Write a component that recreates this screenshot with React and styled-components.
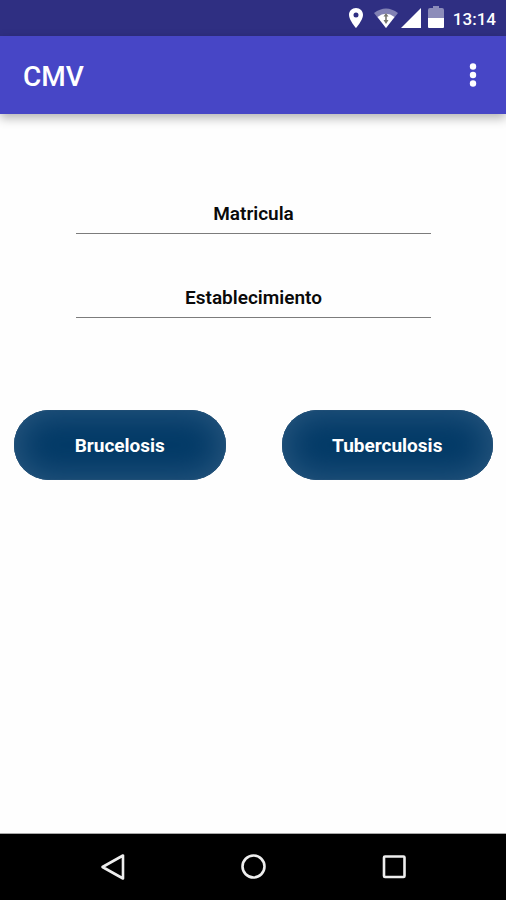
import React from 'react'
import styled, { createGlobalStyle } from 'styled-components'

const GlobalStyle = createGlobalStyle`
  * {
    box-sizing: border-box;
  }

  body {
    margin: 0;
    background: #fefefe;
    font-family: Roboto, sans-serif;
  }
`
const Screen = styled.div`
  display: flex;
  flex-direction: column;
  min-height: 100vh;
`
const StatusBar = styled.div`
  display: flex;
  align-items: center;
  justify-content: flex-end;
  height: 36px;
  padding: 0 10px;
  background: #2f2f82;
  color: #fff;
`
const StatusIcon = styled.svg`
  display: block;
  width: ${props => props.$width}px;
  height: 24px;
  margin-right: ${props => props.$gap}px;
  fill: #fff;
`
const Clock = styled.span`
  padding-top: 1px;
  font-size: 17px;
  font-weight: 500;
  line-height: 24px;
`
const AppBar = styled.header`
  display: flex;
  align-items: center;
  justify-content: space-between;
  height: 78px;
  padding: 0 16px 0 23px;
  background: #4746c6;
  box-shadow: 0 4px 10px rgba(0, 0, 0, .3);
`
const Title = styled.h1`
  margin: 0;
  padding-top: 4px;
  color: #fff;
  font-size: 28px;
  font-weight: 500;
  line-height: 36px;
`
const MenuButton = styled.button`
  display: flex;
  align-items: center;
  justify-content: center;
  width: 34px;
  height: 48px;
  padding: 0;
  border: 0;
  background: none;
  cursor: pointer;
`
const Main = styled.main`
  flex: 1;
  padding: 72px 13px 0 14px;
`
const Fields = styled.div`
  display: flex;
  flex-direction: column;
  gap: 36px;
  padding: 0 13%;
`
const Field = styled.input`
  width: 100%;
  height: 48px;
  padding: 8px 0 0;
  border: 0;
  border-bottom: 1px solid #7c7c7c;
  border-radius: 0;
  outline: none;
  background: none;
  color: #0a0a0a;
  font-family: inherit;
  font-size: 19px;
  font-weight: 600;
  text-align: center;

  &::placeholder {
    color: #0a0a0a;
    opacity: 1;
  }
`
const Actions = styled.div`
  display: flex;
  gap: 56px;
  margin-top: 92px;
`
const ActionButton = styled.button`
  flex: 1;
  height: 70px;
  padding: 0;
  border: 0;
  border-radius: 35px;
  background: #033a67;
  box-shadow: inset 0 0 32px 4px #28577f, inset 0 0 1px 1px #16446c;
  color: #fff;
  font-family: inherit;
  font-size: 19px;
  font-weight: 700;
  cursor: pointer;
`
const NavBar = styled.nav`
  display: grid;
  grid-template-columns: repeat(3, 1fr);
  height: 67px;
  padding: 0 42px;
  border-top: 1px solid #a8a8a8;
  background: #000;
`
const NavButton = styled.button`
  display: flex;
  align-items: center;
  justify-content: center;
  padding: 0;
  border: 0;
  background: none;
  cursor: pointer;
`
const NavIcon = styled.svg`
  width: 28px;
  height: 28px;
  fill: none;
  stroke: #eee;
  stroke-width: 2.6;
  stroke-linejoin: round;
`

const App = () => {
  return (
    <Screen>
      <GlobalStyle />
      <StatusBar>
        <StatusIcon $width={16} $gap={10} viewBox="0 0 16 24">
          <path fillRule="evenodd" d="M8 2C3.9 2 1 5 1 9c0 5 7 13 7 13s7-8 7-13c0-4-2.9-7-7-7Zm0 4.6a2.5 2.5 0 1 1 0 5 2.5 2.5 0 0 1 0-5Z" />
        </StatusIcon>
        <StatusIcon $width={24} $gap={3} viewBox="0 0 24 24">
          <path fillOpacity=".4" d="M0 7Q12-2 24 7L12 22Z" />
          <path d="M3.5 11Q12 4.5 20.5 11L12 22Z" />
          <path fill="#77776f" d="M12 7l2.5 3.5h-1.7v3.5h1.7l-2.5 4-2.5-4h1.7v-3.5H9.5Z" />
        </StatusIcon>
        <StatusIcon $width={20} $gap={7} viewBox="0 0 20 24">
          <path d="M20 2v20H0Z" />
        </StatusIcon>
        <StatusIcon $width={16} $gap={9} viewBox="0 0 16 24">
          <path fillOpacity=".45" d="M5 0h6v2h3q2 0 2 2v8H0V4q0-2 2-2h3Z" />
          <path d="M0 12h16v9q0 1-1 1H1q-1 0-1-1Z" />
        </StatusIcon>
        <Clock>13:14</Clock>
      </StatusBar>
      <AppBar>
        <Title>CMV</Title>
        <MenuButton aria-label="Menu">
          <svg width="8" height="26" viewBox="0 0 8 26" fill="#fff">
            <circle cx="4" cy="4.5" r="3.2" />
            <circle cx="4" cy="13" r="3.2" />
            <circle cx="4" cy="21.5" r="3.2" />
          </svg>
        </MenuButton>
      </AppBar>
      <Main>
        <Fields>
          <Field type="text" placeholder="Matricula" aria-label="Matricula" />
          <Field type="text" placeholder="Establecimiento" aria-label="Establecimiento" />
        </Fields>
        <Actions>
          <ActionButton>Brucelosis</ActionButton>
          <ActionButton>Tuberculosis</ActionButton>
        </Actions>
      </Main>
      <NavBar>
        <NavButton aria-label="Back">
          <NavIcon viewBox="0 0 28 28">
            <path d="M25 2.5v23L4.5 14Z" />
          </NavIcon>
        </NavButton>
        <NavButton aria-label="Home">
          <NavIcon viewBox="0 0 28 28">
            <circle cx="14.5" cy="13.5" r="11" />
          </NavIcon>
        </NavButton>
        <NavButton aria-label="Recent apps">
          <NavIcon viewBox="0 0 28 28">
            <rect x="4" y="3.5" width="20.5" height="20.5" rx="1" />
          </NavIcon>
        </NavButton>
      </NavBar>
    </Screen>
  )
}

export default App
